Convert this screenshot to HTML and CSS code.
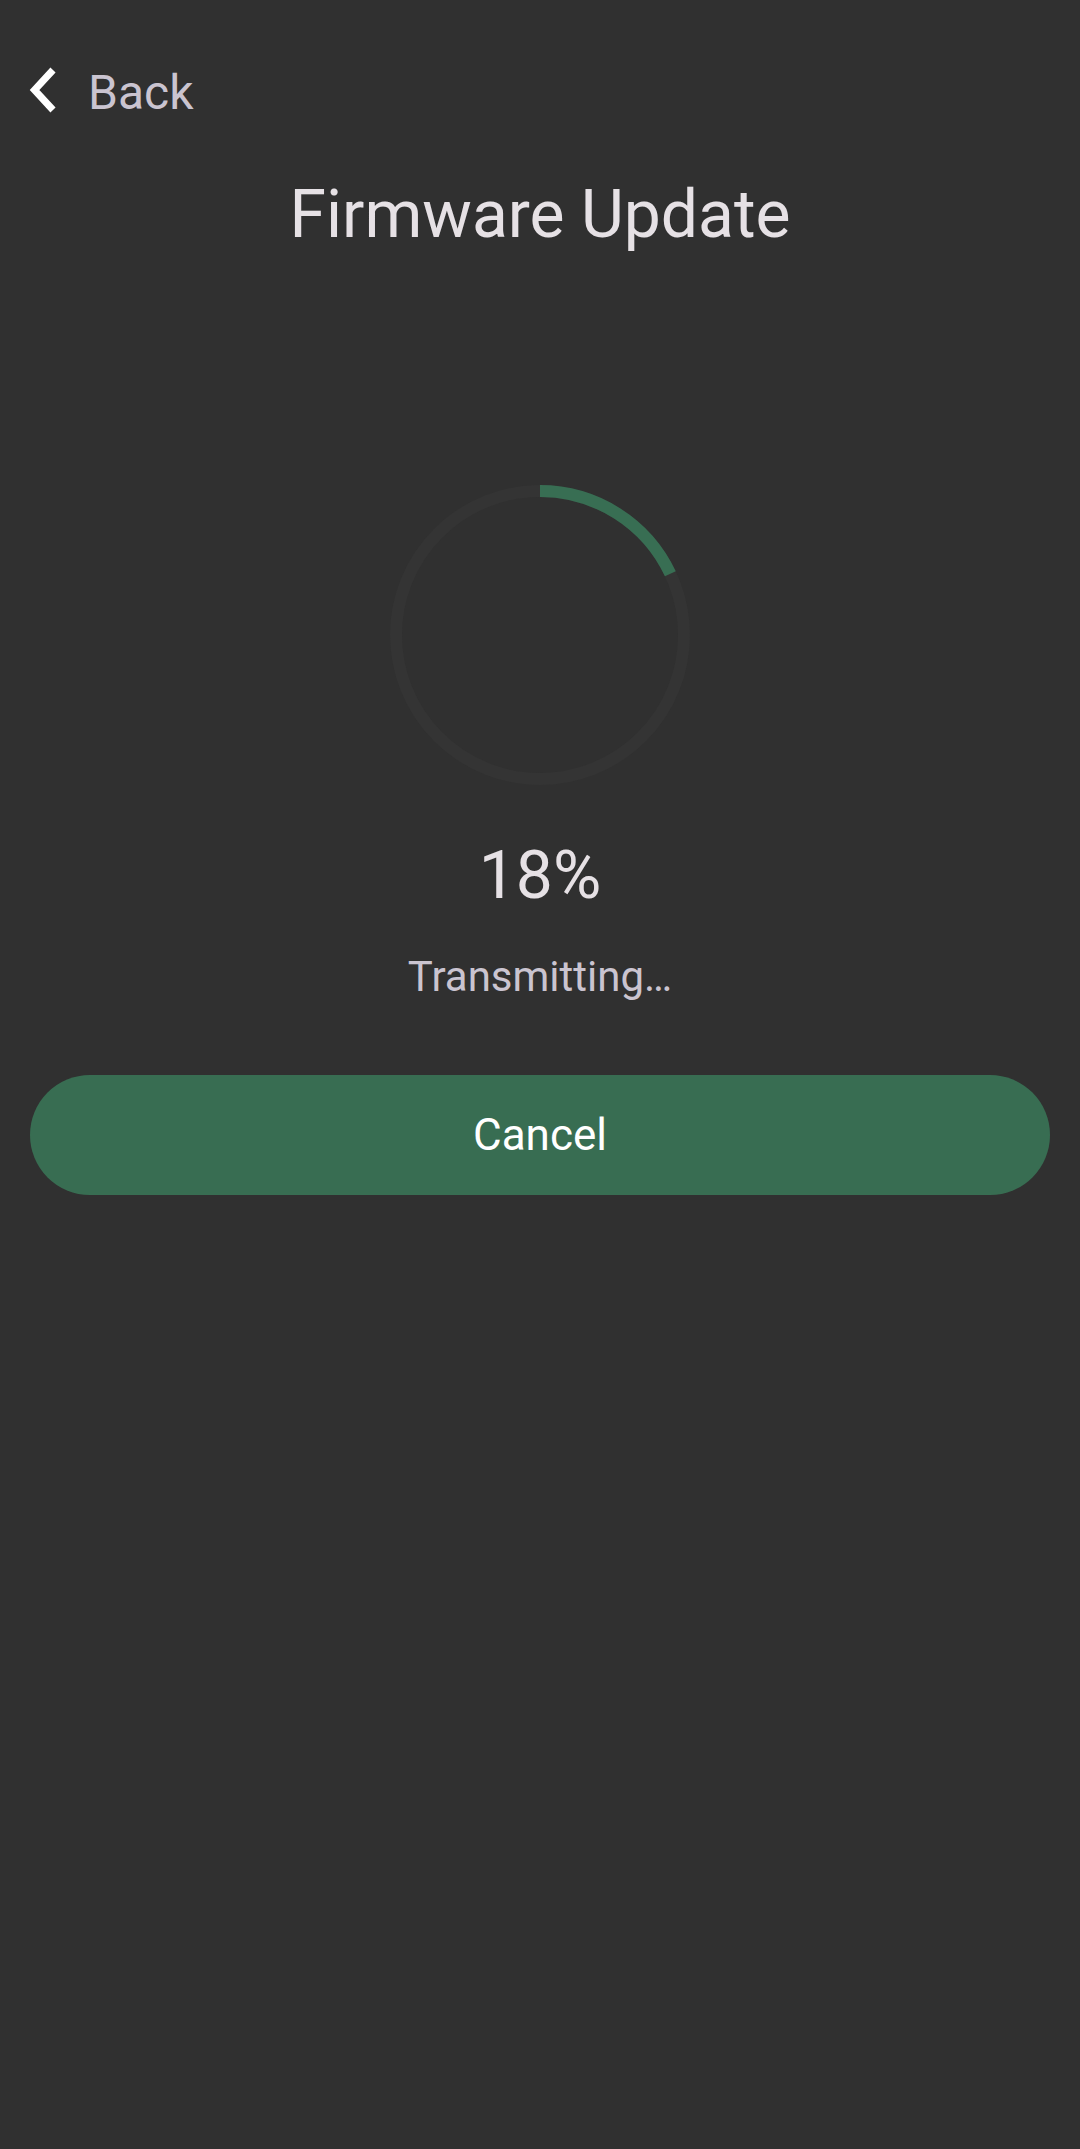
FILE: index.html
```html
<!DOCTYPE html>
<html lang="en">
<head>
<meta charset="utf-8">
<title>Firmware Update</title>
<link rel="stylesheet" href="styles.css">
</head>
<body>
<div class="screen">
  <div class="topbar">
    <svg class="chev" width="32" height="48" viewBox="0 0 32 48" aria-hidden="true">
      <path d="M25 4 L6.5 24 L25 44" fill="none" stroke="#ffffff" stroke-width="7" stroke-linejoin="miter"/>
    </svg>
    <span class="back">Back</span>
  </div>
  <h1 class="title">Firmware Update</h1>
  <div class="ring-wrap">
    <svg class="ring" width="300" height="300" viewBox="0 0 300 300">
      <circle cx="150" cy="150" r="144" fill="none" stroke="#343434" stroke-width="12"/>
      <circle cx="150" cy="150" r="144" fill="none" stroke="#386e53" stroke-width="12" stroke-dasharray="162.86 1000" transform="rotate(-90 150 150)"/>
    </svg>
  </div>
  <div class="percent">18%</div>
  <div class="status">Transmitting…</div>
  <div class="btn-row">
    <div class="btn">Cancel</div>
  </div>
</div>
</body>
</html>
```

FILE: styles.css
```css
html, body {
  margin: 0;
  padding: 0;
  background: #303030;
}
body {
  width: 1080px;
  min-height: 2149px;
  font-family: Roboto, "Noto Sans", "Liberation Sans", sans-serif;
}
.screen {
  display: flex;
  flex-direction: column;
}
.topbar {
  display: flex;
  align-items: flex-start;
  margin-top: 65px;
  height: 56px;
  padding-left: 28px;
}
.chev {
  display: block;
  margin-top: 1px;
}
.back {
  margin-left: 28px;
  font-size: 48px;
  line-height: 56px;
  color: #cac4d0;
}
.title {
  margin: 55px 0 0;
  font-weight: 400;
  font-size: 66px;
  line-height: 77px;
  color: #e6e1e5;
  text-align: center;
}
.ring-wrap {
  display: flex;
  justify-content: center;
  margin-top: 232px;
}
.ring {
  display: block;
}
.percent {
  margin-top: 52px;
  font-size: 66px;
  line-height: 77px;
  color: #e6e1e5;
  text-align: center;
}
.status {
  margin-top: 38px;
  font-size: 42px;
  line-height: 49px;
  color: #cac4d0;
  text-align: center;
}
.btn-row {
  padding: 0 30px;
  margin-top: 74px;
}
.btn {
  height: 120px;
  border-radius: 60px;
  background: #386d52;
  color: #ffffff;
  font-size: 44px;
  display: flex;
  align-items: center;
  justify-content: center;
}
```
